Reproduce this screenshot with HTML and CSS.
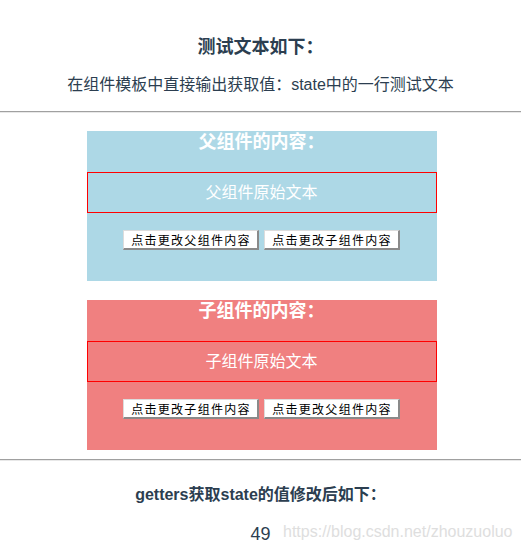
FILE: index.html
```html
<!DOCTYPE html>
<html lang="zh">
<head>
<meta charset="utf-8">
<title>vuex demo</title>
<link rel="stylesheet" href="styles.css">
</head>
<body>
<div class="app">
  <h3 class="title">测试文本如下：</h3>
  <p class="line">在组件模板中直接输出获取值：state中的一行测试文本</p>
  <hr class="rule">
  <div class="panel panel-parent">
    <h2 class="panel-title">父组件的内容：</h2>
    <div class="panel-text">父组件原始文本</div>
    <div class="actions">
      <button class="btn">点击更改父组件内容</button>
      <button class="btn">点击更改子组件内容</button>
    </div>
  </div>
  <div class="panel panel-child">
    <h2 class="panel-title">子组件的内容：</h2>
    <div class="panel-text">子组件原始文本</div>
    <div class="actions">
      <button class="btn">点击更改子组件内容</button>
      <button class="btn">点击更改父组件内容</button>
    </div>
  </div>
  <hr class="rule rule-bottom">
  <h4 class="getters">getters获取state的值修改后如下：</h4>
  <p class="value">49</p>
</div>
<div class="watermark">https://blog.csdn.net/zhouzuoluo</div>
</body>
</html>
```
FILE: styles.css
```css
html, body {
  margin: 0;
  padding: 0;
  background: #fff;
}
body {
  font-family: "Liberation Sans", "Noto Sans CJK SC", sans-serif;
  color: #2c3e50;
}
.app {
  text-align: center;
}
.title {
  margin: 35px 0 0;
  font-size: 18px;
  line-height: 24px;
  font-weight: bold;
}
.line {
  margin: 15px 0 0;
  font-size: 16px;
  line-height: 22px;
}
.rule {
  margin: 15px 0 0;
  border: 0;
  border-top: 1px solid #a0a0a0;
  border-bottom: 1px solid #e8e8e8;
  height: 0;
}
.panel {
  width: 350px;
  height: 150px;
  margin: 18px auto 0;
  position: relative;
  left: 1px;
  color: #fff;
}
.panel-child {
  margin-top: 19px;
}
.panel-parent {
  background: #add8e6;
}
.panel-child {
  background: #f08080;
}
.panel-title {
  margin: 0;
  font-size: 18px;
  line-height: 22px;
  font-weight: bold;
}
.panel-text {
  margin-top: 19px;
  border: 1px solid #ff0000;
  height: 39px;
  line-height: 39px;
  font-size: 16px;
}
.actions {
  margin-top: 17px;
  display: flex;
  justify-content: center;
  gap: 5px;
}
.btn {
  margin: 0;
  padding: 0 0 0 1px;
  width: 136px;
  height: 20px;
  font-family: "Noto Sans CJK SC", sans-serif;
  font-size: 12px;
  line-height: 16px;
  letter-spacing: 1.3px;
  color: #000;
  background: #fff;
  border-top: 1px solid #dcdcdc;
  border-left: 1px solid #dcdcdc;
  border-right: 2px solid #8a8a8a;
  border-bottom: 2px solid #8a8a8a;
  border-radius: 0;
}
.rule-bottom {
  margin-top: 9px;
}
.getters {
  margin: 23px 0 0;
  font-size: 16px;
  line-height: 22px;
  font-weight: bold;
}
.value {
  margin: 16px 0 0;
  font-size: 18px;
  line-height: 24px;
}
.watermark {
  position: absolute;
  left: 283px;
  top: 521px;
  font-family: "Liberation Sans", sans-serif;
  font-size: 16px;
  line-height: 22px;
  color: #dedede;
}
```
